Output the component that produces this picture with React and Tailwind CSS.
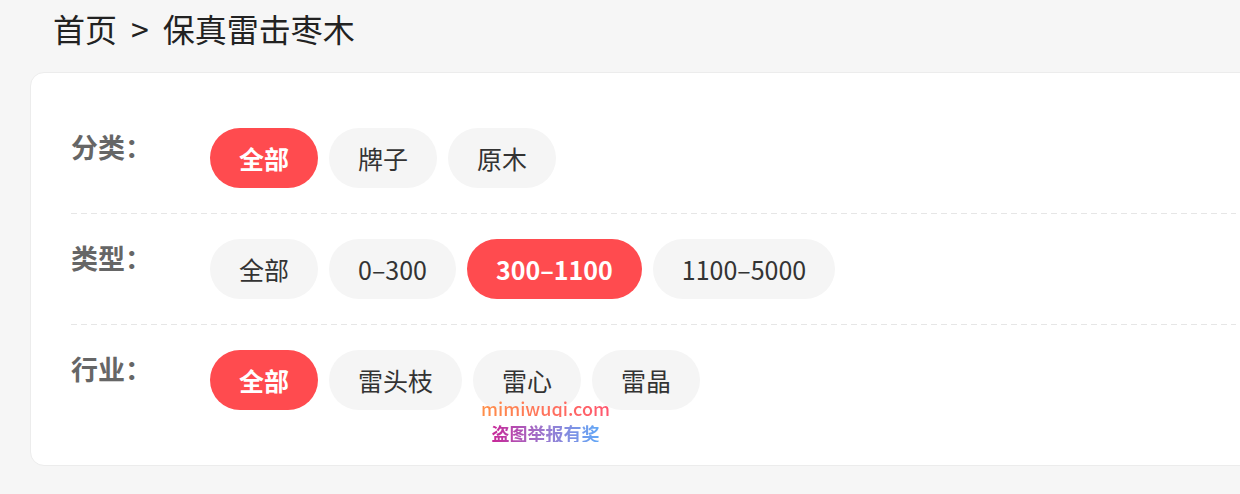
const FONT = { fontFamily: '"Noto Sans CJK SC", "Noto Sans", sans-serif' };

const groups = [
  { label: "分类：", options: ["全部", "牌子", "原木"], active: 0 },
  { label: "类型：", options: ["全部", "0–300", "300–1100", "1100–5000"], active: 2 },
  { label: "行业：", options: ["全部", "雷头枝", "雷心", "雷晶"], active: 0 },
];

function Chip({ text, active }) {
  return (
    <span
      className={
        "h-[60px] px-[29px] rounded-full flex items-center text-[25px] leading-none " +
        (active ? "bg-[#ff4b4f] text-white font-bold" : "bg-[#f5f5f5] text-[#333]")
      }
    >
      {text}
    </span>
  );
}

export default function App() {
  return (
    <div className="w-[1240px] h-[494px] bg-[#f6f6f6] overflow-hidden" style={FONT}>
      {/* breadcrumb */}
      <div className="h-[56px] pl-[53px] flex items-center text-[32px] text-[#222] gap-[14px]">
        <span>首页</span>
        <span>&gt;</span>
        <span>保真雷击枣木</span>
      </div>

      <div className="relative mt-[16px] ml-[30px] w-[1247px] bg-white border border-[#ececec] rounded-[14px] py-[30px] px-[40px]">
        {groups.map((g, i) => (
          <div key={g.label}>
            {i > 0 && (
              <div className="h-px bg-[linear-gradient(to_right,#e6e6e6_6px,transparent_6px)] bg-[length:10px_1px]" />
            )}
            <div className="flex items-start py-[25px]">
              <div className="w-[139px] shrink-0 text-[27px] font-bold text-[#666] leading-[38px]">{g.label}</div>
              <div className="flex gap-[11px]">
                {g.options.map((o, j) => (
                  <Chip key={o} text={o} active={j === g.active} />
                ))}
              </div>
            </div>
          </div>
        ))}

        {/* watermark */}
        <div className="absolute left-[450px] top-[326px] flex flex-col items-center leading-none">
          <span className="text-[18px] font-medium bg-[linear-gradient(to_right,#ff8f48,#ff5670)] bg-clip-text text-transparent">
            mimiwuqi.com
          </span>
          <span className="mt-[7px] text-[18px] font-bold bg-[linear-gradient(to_right,#c92596,#9b7ad0,#62a8f7)] bg-clip-text text-transparent">
            盗图举报有奖
          </span>
        </div>
      </div>
    </div>
  );
}
